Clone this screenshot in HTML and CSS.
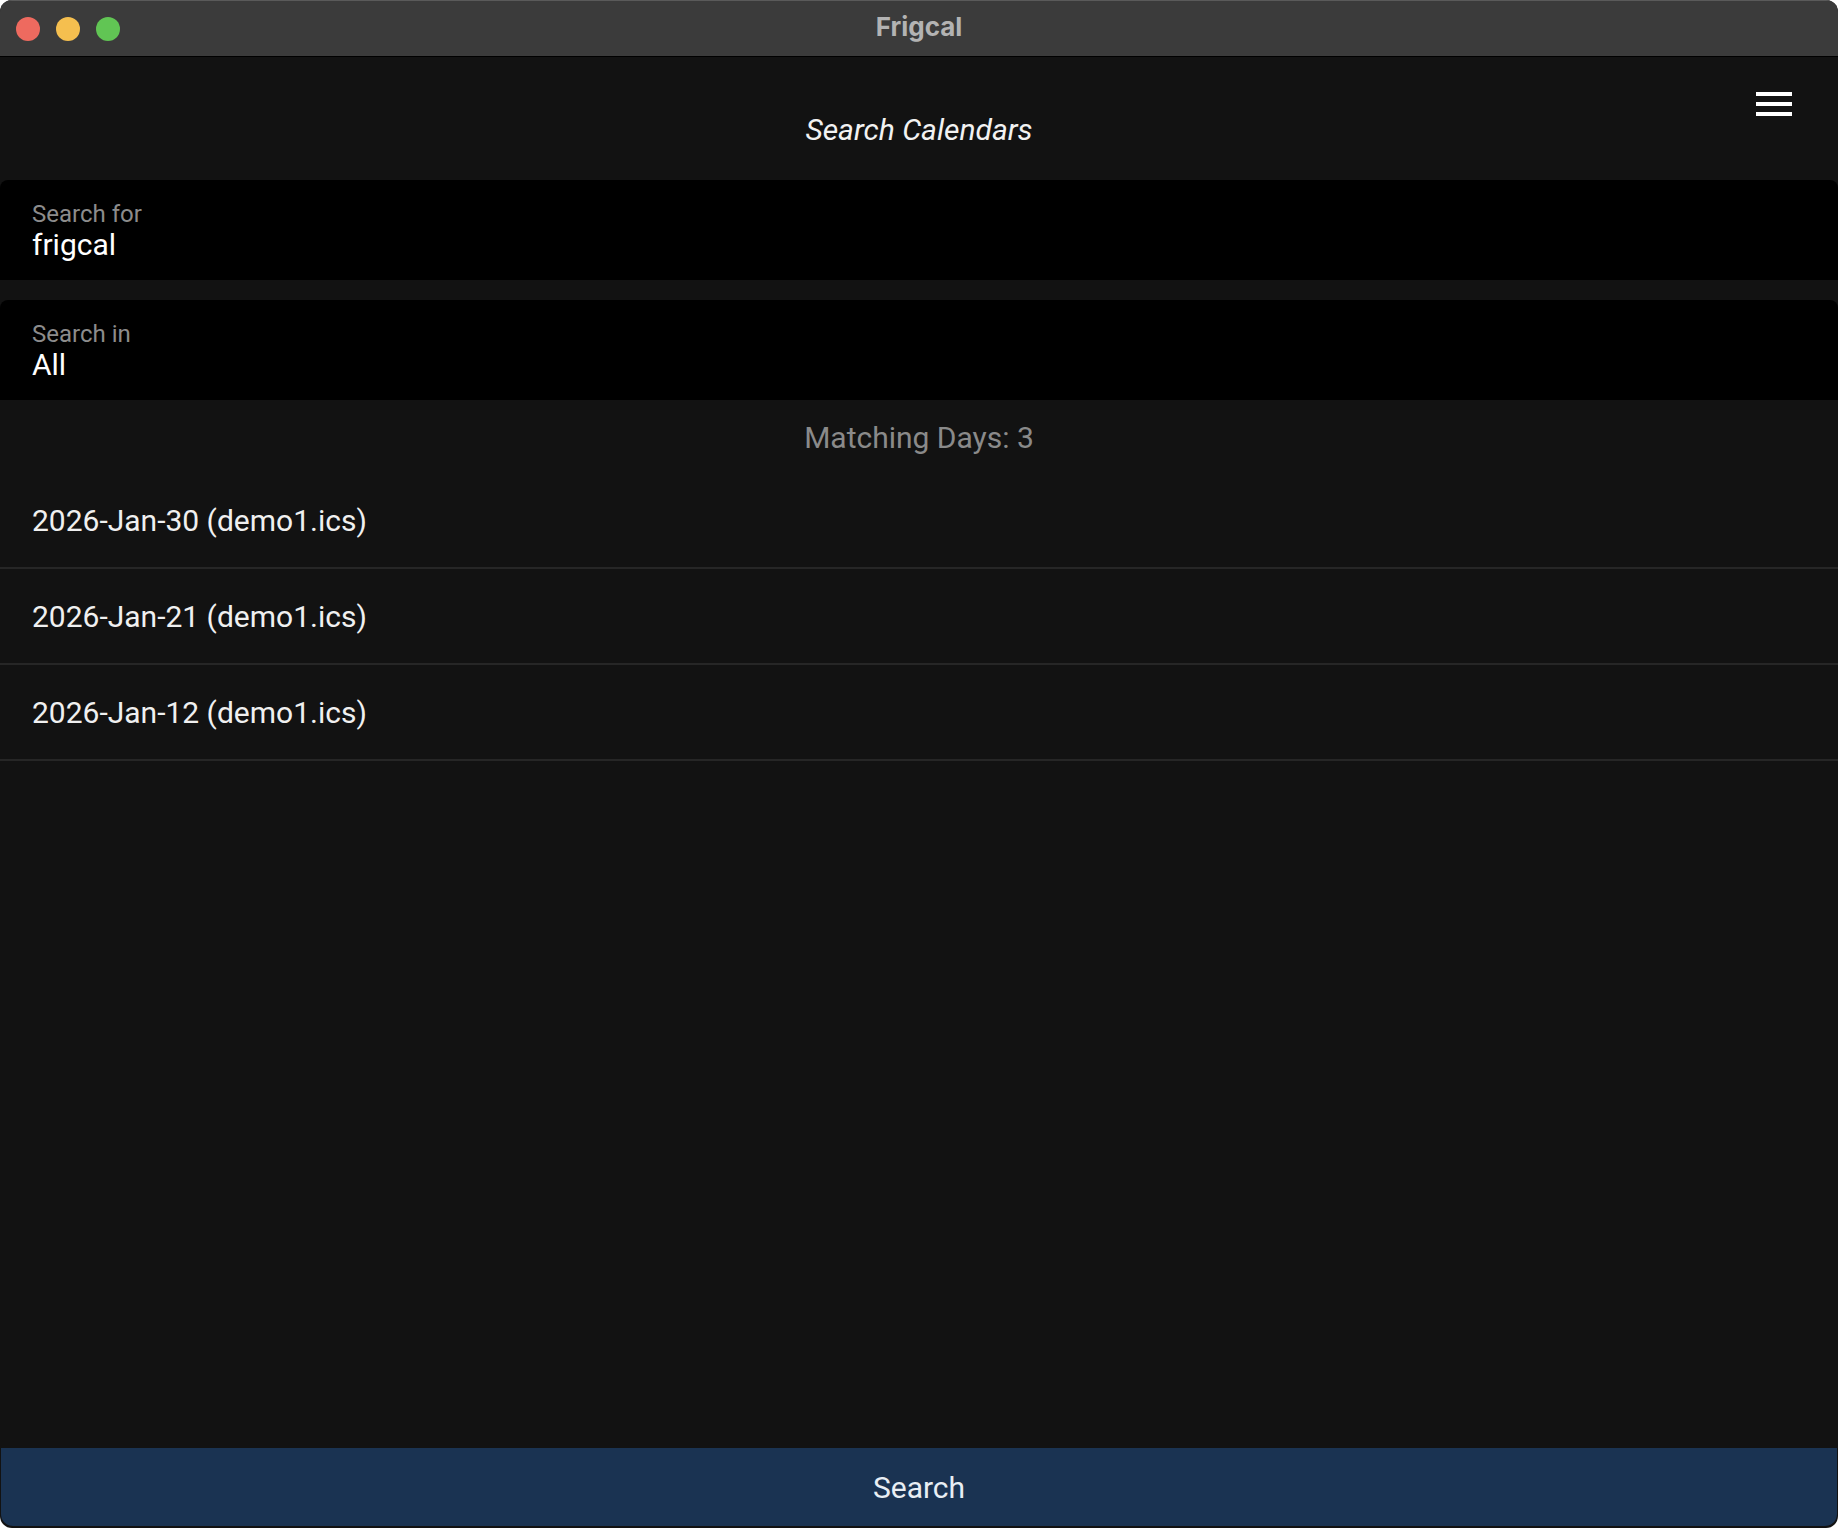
FILE: index.html
```html
<!DOCTYPE html>
<html lang="en">
<head>
  <meta charset="UTF-8">
  <meta name="viewport" content="width=device-width, initial-scale=1.0">
  <title>Frigcal</title>
  <link rel="stylesheet" href="styles.css">
</head>
<body>
  <div class="window">
    <div class="titlebar">
      <div class="lights">
        <span class="light red"></span>
        <span class="light yellow"></span>
        <span class="light green"></span>
      </div>
      <div class="app-name">Frigcal</div>
      <div></div>
    </div>

    <div class="header">
      <div></div>
      <h1>Search Calendars</h1>
      <button class="menu" type="button" aria-label="Menu">
        <svg width="36" height="24" viewBox="0 0 36 24">
          <rect x="0" y="0" width="36" height="4" fill="#fff"/>
          <rect x="0" y="10" width="36" height="4" fill="#fff"/>
          <rect x="0" y="20" width="36" height="4" fill="#fff"/>
        </svg>
      </button>
    </div>

    <div class="field">
      <label for="searchFor">Search for</label>
      <input id="searchFor" type="text" value="frigcal">
    </div>

    <div class="field">
      <label for="searchIn">Search in</label>
      <div class="value" id="searchIn">All</div>
    </div>

    <div class="matches">Matching Days: 3</div>

    <ul class="results">
      <li>2026-Jan-30 (demo1.ics)</li>
      <li>2026-Jan-21 (demo1.ics)</li>
      <li>2026-Jan-12 (demo1.ics)</li>
    </ul>

    <div class="spacer"></div>

    <button class="search-btn" type="button">Search</button>
  </div>
</body>
</html>
```

FILE: styles.css
```css
body {
  margin: 0;
  background: #fff;
  font-family: Roboto, "Noto Sans", sans-serif;
}
.window {
  width: 1838px;
  height: 1528px;
  box-sizing: border-box;
  background: #121212;
  border-radius: 12px;
  overflow: hidden;
  display: flex;
  flex-direction: column;
}
.titlebar {
  height: 57px;
  box-sizing: border-box;
  background: #3b3b3b;
  border-top: 1px solid #5a5a5a;
  border-bottom: 1px solid #000;
  display: grid;
  grid-template-columns: 1fr auto 1fr;
  align-items: center;
  flex-shrink: 0;
}
.lights {
  display: flex;
  gap: 16px;
  padding-left: 16px;
}
.light {
  width: 24px;
  height: 24px;
  border-radius: 50%;
}
.red { background: #ee6a5f; }
.yellow { background: #f5bf4f; }
.green { background: #61c554; }
.app-name {
  font-family: Inter, "Open Sans", sans-serif;
  font-weight: 700;
  font-size: 26px;
  color: #b3b3b3;
  margin-top: -5px;
}
.header {
  height: 123px;
  display: grid;
  grid-template-columns: 1fr auto 1fr;
  flex-shrink: 0;
}
.header h1 {
  margin: 55px 0 0;
  align-self: start;
  font-size: 30px;
  line-height: 36px;
  font-weight: 400;
  font-style: italic;
  color: #f2f2f2;
}
.menu {
  justify-self: end;
  align-self: start;
  margin: 35px 46px 0 0;
  padding: 0;
  border: none;
  background: none;
  display: flex;
}
.field {
  background: #000;
  border-radius: 8px 8px 0 0;
  padding: 20px 32px 18px;
  height: 100px;
  box-sizing: border-box;
  flex-shrink: 0;
}
.field + .field {
  margin-top: 20px;
}
.field label {
  display: block;
  font-size: 24px;
  line-height: 28px;
  color: #8c8c8c;
}
.field input,
.field .value {
  display: block;
  width: 100%;
  box-sizing: border-box;
  margin: 0;
  padding: 0;
  border: none;
  outline: none;
  background: none;
  font-family: Roboto, "Noto Sans", sans-serif;
  font-size: 30px;
  line-height: 34px;
  height: 34px;
  color: #fff;
}
.matches {
  height: 73px;
  box-sizing: border-box;
  padding-top: 2px;
  display: flex;
  align-items: center;
  justify-content: center;
  font-size: 30px;
  color: #8a8a8a;
  flex-shrink: 0;
}
.results {
  list-style: none;
  margin: 0;
  padding: 0;
}
.results li {
  height: 94px;
  display: flex;
  align-items: center;
  padding-left: 32px;
  font-size: 30px;
  color: #f0f0f0;
  border-bottom: 2px solid #262626;
}
.spacer {
  flex: 1;
}
.search-btn {
  flex-shrink: 0;
  height: 78px;
  margin: 0 1px 2px;
  border: none;
  border-radius: 0 0 12px 12px;
  background: #1a3352;
  color: #e8eef4;
  font-family: Roboto, "Noto Sans", sans-serif;
  font-size: 30px;
  cursor: pointer;
}
```
